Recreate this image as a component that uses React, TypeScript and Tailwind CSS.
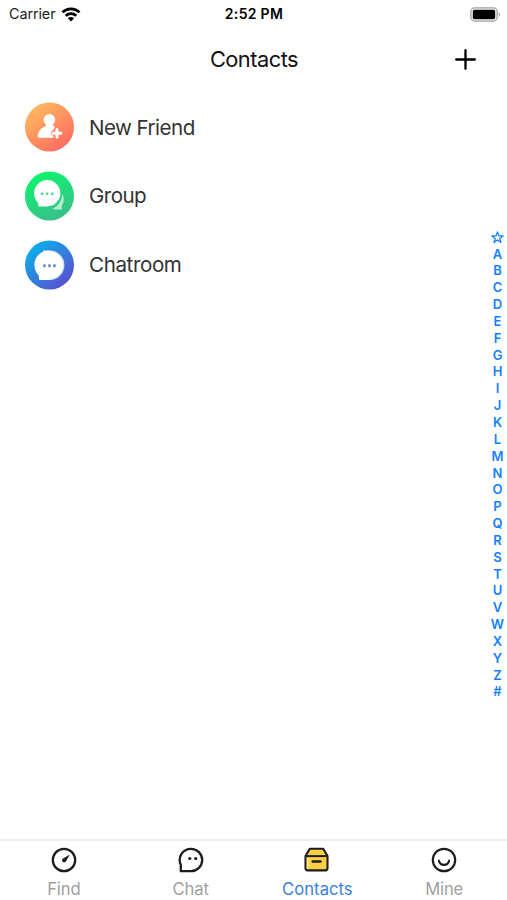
import type { ReactNode } from "react";

interface Entry {
  label: string;
  icon: ReactNode;
  spacing: string;
}

interface Tab extends Entry {
  active?: boolean;
}

const letters = "ABCDEFGHIJKLMNOPQRSTUVWXYZ#".split("");

function WifiIcon() {
  return (
    <svg width="20" height="15" viewBox="0 0 20 15" fill="none" stroke="#000" strokeWidth="2.7">
      <path d="M1.5 5.3a12.2 12.2 0 0 1 17 0" />
      <path d="M4.7 8.8a7.7 7.7 0 0 1 10.6 0" />
      <path d="M10 14.4 6.9 11.3a4.4 4.4 0 0 1 6.2 0Z" fill="#000" stroke="none" />
    </svg>
  );
}

function BatteryIcon() {
  return (
    <svg width="31" height="15" viewBox="0 0 31 15">
      <rect x="0.9" y="0.9" width="26.2" height="13.2" rx="3.8" fill="#fff" stroke="#b8b8b8" strokeWidth="1.8" />
      <rect x="2.8" y="2.8" width="22.4" height="9.4" rx="1.8" fill="#000" />
      <path d="M28.7 5.2c1.9.7 1.9 3.9 0 4.6Z" fill="#aaa" />
    </svg>
  );
}

function NewFriendIcon() {
  return (
    <svg width="49" height="50" viewBox="0 0 49 49">
      <defs>
        <linearGradient id="orange" x1="0.15" y1="0.1" x2="0.8" y2="0.95">
          <stop offset="0" stopColor="#ffb85f" />
          <stop offset="1" stopColor="#ff6b62" />
        </linearGradient>
      </defs>
      <circle cx="24.5" cy="24.5" r="24.5" fill="url(#orange)" />
      <circle cx="24.4" cy="17.3" r="5.8" fill="#fff" />
      <path
        d="M21.3 20.5h6.2c-.5 1.6.1 2.8 2.6 3.8-1 .8-1.4 1.9-1.3 2.9-3 .4-3.7 4.8-.9 5.9.7.3.9 1.5.2 2.1H13.9c-1 0-1.4-.7-1.3-1.6.5-4.8 3.2-8 6.4-9.2 2-.7 2.8-2.2 2.3-3.9Z"
        fill="#fff"
      />
      <path d="M32 26.9v7.6M28.2 30.7h7.6" stroke="#fff" strokeWidth="3" strokeLinecap="round" />
    </svg>
  );
}

function GroupIcon() {
  return (
    <svg width="49" height="50" viewBox="0 0 49 49">
      <defs>
        <linearGradient id="green" x1="0.3" y1="0" x2="0.75" y2="1">
          <stop offset="0" stopColor="#0df56d" />
          <stop offset="1" stopColor="#3bbd8c" />
        </linearGradient>
      </defs>
      <circle cx="24.5" cy="24.5" r="24.5" fill="url(#green)" />
      <path d="M37.2 22.3c2.2 4 2.1 8.7-.6 12.1l.4 2.6c0 .8-.3 1.1-1 1.1h-5.5c-1.3 0-2.4-.4-3.2-1 5.8-1.8 9.6-7.5 9.9-14.8Z" fill="#b2efcf" />
      <g fill="#fff">
        <circle cx="22.2" cy="21.7" r="13.1" />
        <path d="M10.9 28.2c1.9 1.5 2.5 3 2.4 5.6 0 .9.4 1.3 1.3 1.3h7.8V24Z" />
      </g>
      <g fill="#45d99a">
        <rect x="15.7" y="20.9" width="2.6" height="2.6" rx=".7" />
        <rect x="20.8" y="20.9" width="2.6" height="2.6" rx=".7" />
        <rect x="25.9" y="20.9" width="2.6" height="2.6" rx=".7" />
      </g>
    </svg>
  );
}

function ChatroomIcon() {
  return (
    <svg width="49" height="50" viewBox="0 0 49 49">
      <defs>
        <linearGradient id="blue" x1="0.15" y1="0.1" x2="0.85" y2="0.9">
          <stop offset="0" stopColor="#08b0ea" />
          <stop offset="1" stopColor="#5c4fd0" />
        </linearGradient>
      </defs>
      <circle cx="24.5" cy="24.5" r="24.5" fill="url(#blue)" />
      <path d="M24.6 10a14.7 14.7 0 0 1 0 29.6H18V10Z" fill="#cfe4fa" />
      <g fill="#fff">
        <circle cx="23.6" cy="24.4" r="14.2" />
        <path d="M11 31c2 1.7 3 3.8 3 7.1 0 1 .5 1.5 1.4 1.5h9.2l6-4L24 26Z" />
      </g>
      <g fill="#5b83dc">
        <rect x="18.2" y="23.8" width="2.5" height="3" rx=".7" />
        <rect x="23.2" y="23.8" width="2.5" height="3" rx=".7" />
        <rect x="28.2" y="23.8" width="2.5" height="3" rx=".7" />
      </g>
    </svg>
  );
}

function FindIcon() {
  return (
    <svg width="28" height="28" viewBox="0 0 28 28">
      <circle cx="14" cy="14" r="11.2" fill="none" stroke="#1d1d1f" strokeWidth="2.3" />
      <path d="m19.9 8.4-3.9 6.8a2.1 2.1 0 1 1-3-2.7Z" fill="#1d1d1f" />
    </svg>
  );
}

function ChatIcon() {
  return (
    <svg width="28" height="28" viewBox="0 0 28 28">
      <path
        d="M14 2.8a11.2 11.2 0 1 1 0 22.4H3.8V18.8A11.2 11.2 0 0 1 14 2.8Z"
        fill="none"
        stroke="#1d1d1f"
        strokeWidth="2.3"
        strokeLinejoin="round"
      />
      <circle cx="12.8" cy="12.5" r="1.6" fill="#1d1d1f" />
      <circle cx="18.7" cy="12.5" r="1.6" fill="#1d1d1f" />
    </svg>
  );
}

function ContactsIcon() {
  return (
    <svg width="28" height="28" viewBox="0 0 28 28" stroke="#1d1d1f" strokeLinejoin="round">
      <path d="M6.8 2.7h13.4l4.3 7.3v12.6a1.8 1.8 0 0 1-1.8 1.8H4.3a1.8 1.8 0 0 1-1.8-1.8V10Z" fill="#fbd044" strokeWidth="2.1" />
      <path d="M3.4 10.1h20.2" strokeWidth="2" />
      <path d="M9.7 15.6h7.8" strokeWidth="2.5" strokeLinecap="round" />
      <path d="M4.6 12v10.5" stroke="#ffe89b" strokeWidth="1.6" />
    </svg>
  );
}

function MineIcon() {
  return (
    <svg width="28" height="28" viewBox="0 0 28 28" fill="none" stroke="#1d1d1f" strokeLinecap="round">
      <circle cx="14" cy="14" r="11.2" strokeWidth="2.2" />
      <path d="M8.9 14.7c1.3 5.5 8.9 5.5 10.2 0" strokeWidth="2.2" />
    </svg>
  );
}

const entries: Entry[] = [
  { label: "New Friend", icon: <NewFriendIcon />, spacing: "tracking-[-0.55px]" },
  { label: "Group", icon: <GroupIcon />, spacing: "tracking-[-0.55px]" },
  { label: "Chatroom", icon: <ChatroomIcon />, spacing: "tracking-[-0.4px]" },
];

const tabs: Tab[] = [
  { label: "Find", icon: <FindIcon />, spacing: "tracking-[-0.1px]" },
  { label: "Chat", icon: <ChatIcon />, spacing: "tracking-[-0.05px]" },
  { label: "Contacts", icon: <ContactsIcon />, spacing: "tracking-[0.05px]", active: true },
  { label: "Mine", icon: <MineIcon />, spacing: "tracking-[-0.2px]" },
];

export default function App() {
  return (
    <div className="flex h-[900px] w-[507px] flex-col overflow-hidden bg-white font-['Inter','Liberation_Sans',sans-serif]">
      <div className="grid h-7 grid-cols-3 items-center px-[7px] text-black">
        <div className="flex items-center gap-1.5 pl-0.5 text-[14.4px] leading-5 tracking-[-0.1px] text-[#222]">
          <span>Carrier</span>
          <WifiIcon />
        </div>
        <div className="pl-px text-center text-[14px] font-semibold leading-5 tracking-[0.3px]">2:52 PM</div>
        <div className="-mr-px flex justify-end">
          <BatteryIcon />
        </div>
      </div>

      <header className="grid h-[62px] grid-cols-[1fr_auto_1fr] items-center pr-[31px]">
        <h1 className="col-start-2 ml-8 pb-px text-[21.8px] leading-7 tracking-[-0.5px] text-[#111]">Contacts</h1>
        <button className="justify-self-end" aria-label="Add">
          <svg width="21" height="21" viewBox="0 0 21 21" stroke="#000" strokeWidth="2.3" strokeLinecap="round">
            <path d="M10.5 1.2v18.6M1.2 10.5h18.6" />
          </svg>
        </button>
      </header>

      <main className="flex flex-1 justify-between pt-3">
        <ul className="flex flex-col gap-[18.9px] pl-[25px]">
          {entries.map((entry) => (
            <li key={entry.label} className="flex h-[50px] items-center gap-[15px]">
              {entry.icon}
              <span className={`pt-px text-[20.6px] leading-7 text-[#333] ${entry.spacing}`}>{entry.label}</span>
            </li>
          ))}
        </ul>
        <nav className="-mr-[0.5px] mt-[126.7px] flex w-5 flex-col items-center text-[13px] font-semibold text-[#1380ff]">
          <span className="flex h-[16.85px] items-center">
            <svg width="13" height="13" viewBox="0 0 13 13" fill="none" stroke="currentColor" strokeWidth="1.3" strokeLinejoin="round">
              <path d="m6.5.9 1.4 4h4.2L8.7 7.4l1.3 4.1-3.5-2.5L3 11.5l1.3-4.1L.9 4.9h4.2Z" />
            </svg>
          </span>
          {letters.map((letter) => (
            <span key={letter} className="h-[16.85px] leading-[16.85px]">
              {letter}
            </span>
          ))}
        </nav>
      </main>

      <footer className="grid h-[61px] grid-cols-4 border-t-2 border-[#efefef]">
        {tabs.map((tab) => (
          <div key={tab.label} className="flex flex-col items-center pl-px pt-[5px]">
            {tab.icon}
            <span
              className={`mt-[5px] text-[16.6px] leading-5 ${tab.spacing} ${tab.active ? "text-[#3b80d8]" : "text-[#a0a0a0]"}`}
            >
              {tab.label}
            </span>
          </div>
        ))}
      </footer>
    </div>
  );
}
